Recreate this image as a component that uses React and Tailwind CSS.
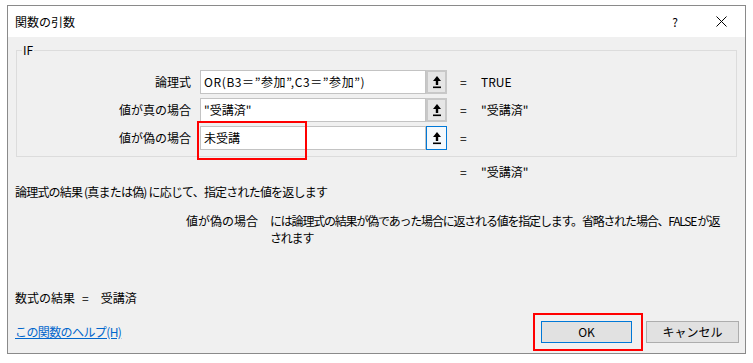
function RefIcon() {
  return (
    <svg width="10" height="14" viewBox="0 0 10 14">
      <path d="M5 1 L9 6 L6.2 6 L6.2 10 L3.8 10 L3.8 6 L1 6 Z" fill="#000" />
      <rect x="1" y="11.5" width="8" height="1.6" fill="#000" />
    </svg>
  );
}

function ArgRow({ label, value, result, focused }) {
  return (
    <div className="flex items-center h-[24px]">
      <div className="w-[174px] shrink-0 text-right whitespace-nowrap">{label}</div>
      <div className="ml-[9px] w-[226px] shrink-0 h-[24px] bg-white border border-[#c3c3c3] flex items-center pl-[3px] whitespace-nowrap overflow-hidden">
        {value}
      </div>
      {focused ? (
        <div className="w-[21px] shrink-0 h-[24px] border border-[#0078d7] bg-[#f4f9fd] flex items-center justify-center">
          <RefIcon />
        </div>
      ) : (
        <div className="w-[21px] shrink-0 h-[24px] border-2 border-[#c8c8c8] bg-[#e6e6e6] flex items-center justify-center">
          <RefIcon />
        </div>
      )}
      <div className="ml-[13px] w-[21px] shrink-0">=</div>
      <div className="whitespace-nowrap">{result}</div>
    </div>
  );
}

export default function App() {
  return (
    <div className="relative w-[753px] h-[363px] bg-white pt-[5px] pl-[7px] font-['Noto_Sans_CJK_JP','Noto_Sans',sans-serif] text-[12px] text-black">
      <div className="w-[739px] h-[349px] border border-[#8a8a8a] bg-[#f0f0f0] flex flex-col">
        {/* Title bar */}
        <div className="h-[31px] bg-white flex items-center pl-[7px] pr-[18px] shrink-0">
          <span className="text-[12px]">関数の引数</span>
          <span className="ml-auto text-[12px]">?</span>
          <svg className="ml-[38px]" width="11" height="11" viewBox="0 0 11 11">
            <path d="M0.5 0.5 L10.5 10.5 M10.5 0.5 L0.5 10.5" stroke="#000" strokeWidth="1" />
          </svg>
        </div>

        {/* Group box */}
        <div className="relative mt-[13px] ml-[8px] w-[721px] h-[107px] border border-[#dcdcdc] shrink-0 pt-[19px] flex flex-col gap-[4px]">
          <span className="absolute left-[5px] top-[-9px] bg-[#f0f0f0] px-[1px] leading-[16px]">IF</span>
          <ArgRow label="論理式" value={<span className="tracking-[0.6px]">OR(B3＝”参加”,C3＝”参加”)</span>} result="TRUE" />
          <ArgRow label="値が真の場合" value={'"受講済"'} result={'"受講済"'} />
          <ArgRow label="値が偽の場合" value="未受講" result="" focused />
        </div>

        <div className="mt-[7px] leading-[16px] flex pl-[452px]">
          <span className="w-[21px]">=</span>
          <span>"受講済"</span>
        </div>

        <div className="mt-[4px] leading-[16px] pl-[7px] whitespace-nowrap tracking-[-0.8px]">
          論理式の結果 (真または偽) に応じて、指定された値を返します
        </div>

        <div className="mt-[12px] leading-[17px] flex">
          <div className="w-[250px] shrink-0 text-right whitespace-nowrap">値が偽の場合</div>
          <div className="ml-[12px] whitespace-nowrap tracking-[-1.2px]">
            には論理式の結果が偽であった場合に返される値を指定します。省略された場合、FALSE が返
            <br />
            されます
          </div>
        </div>

        <div className="mt-[44px] leading-[16px] pl-[7px] flex whitespace-nowrap">
          <span>数式の結果</span>
          <span className="ml-[7px]">=</span>
          <span className="ml-[12px]">受講済</span>
        </div>

        <div className="mt-[15px] h-[22px] flex items-center pl-[7px] pr-[6px]">
          <span className="text-[#0066cc] underline whitespace-nowrap tracking-[-0.6px]">この関数のヘルプ(H)</span>
          <button className="ml-auto w-[91px] h-[22px] border border-[#0078d7] bg-[#e1e1e1] flex items-center justify-center">
            OK
          </button>
          <button className="ml-[14px] w-[93px] h-[22px] border border-[#adadad] bg-[#e1e1e1] flex items-center justify-center">
            キャンセル
          </button>
        </div>
      </div>

      {/* Red annotation boxes */}
      <div className="absolute left-[197px] top-[121px] w-[110px] h-[39px] border-2 border-[#ff0000]" />
      <div className="absolute left-[533px] top-[313px] w-[110px] h-[38px] border-2 border-[#ff0000]" />
    </div>
  );
}
